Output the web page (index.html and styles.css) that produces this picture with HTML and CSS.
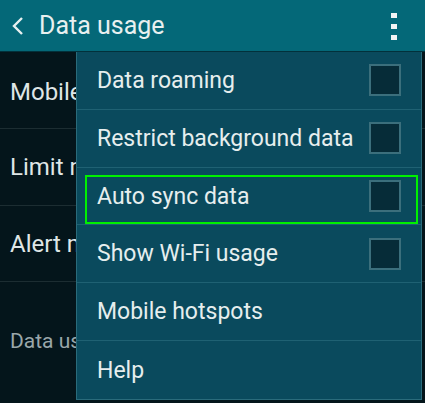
FILE: index.html
```html
<!DOCTYPE html>
<html>
<head>
<meta charset="utf-8">
<link rel="stylesheet" href="styles.css">
</head>
<body>
<div class="screen">
  <header class="bar">
    <svg class="back" width="14" height="20" viewBox="0 0 14 20"><path d="M11 2 L3 10 L11 18" fill="none" stroke="#e8f0f0" stroke-width="2.4"/></svg>
    <span class="title">Data usage</span>
    <span class="kebab"><i></i><i></i><i></i></span>
  </header>
  <div class="content">
    <div class="row r1">Mobile data</div>
    <div class="row r2">Limit mobile data usage</div>
    <div class="row r3">Alert me about data usage</div>
    <div class="row r4 sub">Data usage cycle</div>
  </div>
  <div class="menu">
    <div class="item"><span>Data roaming</span><span class="box"></span></div>
    <div class="item"><span>Restrict background data</span><span class="box"></span></div>
    <div class="item hl"><span>Auto sync data</span><span class="box"></span></div>
    <div class="item"><span>Show Wi-Fi usage</span><span class="box"></span></div>
    <div class="item"><span>Mobile hotspots</span></div>
    <div class="item last"><span>Help</span></div>
  </div>
</div>
</body>
</html>
```
FILE: styles.css
```css
* { box-sizing: border-box; }
html, body { margin: 0; padding: 0; }
body { width: 425px; height: 403px; overflow: hidden; background: #04151b; font-family: Roboto, "Noto Sans", sans-serif; color: #e6eeee; }
.screen { position: relative; width: 425px; height: 403px; overflow: hidden; }
.bar { height: 52px; background: #046878; display: flex; align-items: center; border-bottom: 1px solid #02313b; }
.back { margin-left: 11px; margin-right: 14px; }
.title { font-size: 25px; color: #e8f0f0; }
.kebab { margin-left: auto; margin-right: 28px; display: flex; flex-direction: column; gap: 6px; padding-top: 1px; }
.kebab i { display: block; width: 6px; height: 5px; background: #f2f4f4; }
.content { display: flex; flex-direction: column; }
.row { font-size: 24px; color: #dfe6e6; padding-left: 10px; display: flex; align-items: center; border-bottom: 1px solid #1c2d32; white-space: nowrap; }
.r1 { height: 77px; padding-top: 4px; }
.r2 { height: 77px; }
.r3 { height: 76px; }
.r4 { height: 120px; border-bottom: none; }
.sub { font-size: 21px; color: #9aa7aa; align-items: flex-start; padding-top: 47px; }
.menu { position: absolute; left: 76px; top: 52px; width: 346px; height: 348px; background: #0a4a5d; border: 1px solid #2a6b7b; border-top: none; display: flex; flex-direction: column; }
.item { height: 58px; display: flex; align-items: center; justify-content: space-between; padding-left: 20px; padding-right: 20px; font-size: 23px; color: #e6eeee; border-bottom: 1px solid #1f6173; position: relative; white-space: nowrap; }
.item.last { border-bottom: none; }
.box { width: 32px; height: 32px; background: #062c38; border: 2px solid #3b6f7c; flex: none; }
.hl::after { content: ""; position: absolute; left: 8px; top: 7px; width: 329px; height: 45px; border: 2px solid #00f000; }
```
